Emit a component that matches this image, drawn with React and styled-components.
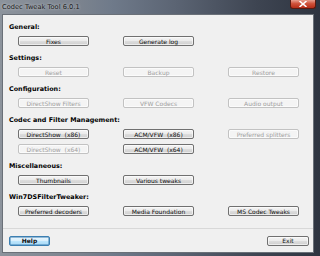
import React from "react";
import styled, { createGlobalStyle } from "styled-components";

const Global = createGlobalStyle`
  html, body { margin: 0; padding: 0; width: 320px; height: 256px; overflow: hidden; background: #3a4250; }
  * { box-sizing: border-box; }
`;

const Window = styled.div`
  width: 320px;
  height: 256px;
  display: flex;
  flex-direction: column;
  background: linear-gradient(90deg, #8c939c 0%, #7b838e 25%, #6f7a8a 35%, #5b6473 55%, #3e4552 80%, #2e3440 100%);
  font-family: "DejaVu Sans", Tahoma, sans-serif;
`;

const TitleBar = styled.div`
  height: 14px;
  display: flex;
  align-items: center;
  padding-left: 2px;
  position: relative;
`;

const Title = styled.span`
  font-family: "DejaVu Sans", sans-serif;
  font-size: 6.6px;
  color: #1a1a1a;
  text-shadow: 0 0 3px rgba(255,255,255,0.7);
  letter-spacing: 0.05px;
`;

const CloseBtn = styled.div`
  position: absolute;
  right: 4px;
  top: 0;
  width: 26px;
  height: 9px;
  border-radius: 0 0 3px 3px;
  background: linear-gradient(180deg, #e8a090 0%, #d0523a 45%, #b52d18 100%);
  border: 1px solid #5a1a10;
  border-top: none;
  display: flex;
  align-items: center;
  justify-content: center;
`;

const Body = styled.div`
  flex: 1;
  display: flex;
  padding: 0 6px 3px 2px;
`;

const Client = styled.div`
  flex: 1;
  background: #f0f0f0;
  display: flex;
  flex-direction: column;
  border: 1px solid #6a7078;
`;

const Content = styled.div`
  flex: 1;
  padding: 7px 0 0 15px;
  display: flex;
  flex-direction: column;
  gap: 7px;
`;

const Section = styled.div`
  display: flex;
  flex-direction: column;
`;

const Header = styled.div`
  height: 10px;
  line-height: 10px;
  font-size: 6.4px;
  font-weight: bold;
  color: #000;
  margin-left: -9px;
  margin-bottom: 4px;
`;

const Grid = styled.div`
  display: grid;
  grid-template-columns: 71px 71px 71px;
  column-gap: 34px;
  row-gap: 5px;
`;

const Button = styled.div`
  height: 10px;
  border-radius: 2px;
  border: 1px solid ${p => (p.disabled ? "#c2c2c2" : "#707070")};
  background: ${p =>
    p.focus
      ? "linear-gradient(180deg, #eaf6fd 0%, #d9f0fc 50%, #bee6fd 51%, #a7d9f5 100%)"
      : p.disabled
      ? "#f4f4f4"
      : "linear-gradient(180deg, #f4f4f4 0%, #ebebeb 50%, #dddddd 51%, #cfcfcf 100%)"};
  box-shadow: ${p => (p.focus ? "0 0 0 0.5px #3c7fb1 inset" : "inset 0 0 0 1px rgba(255,255,255,0.6)")};
  border-color: ${p => (p.focus ? "#3c7fb1" : p.disabled ? "#c2c2c2" : "#707070")};
  display: flex;
  align-items: center;
  justify-content: center;
  font-size: 6px;
  font-weight: ${p => (p.focus ? "bold" : "normal")};
  color: ${p => (p.disabled ? "#a0a0a0" : "#111")};
  white-space: nowrap;
  grid-column: ${p => p.col || "auto"};
`;

const Footer = styled.div`
  height: 24px;
  border-top: 1px solid #d8d8d8;
  display: flex;
  align-items: center;
  justify-content: space-between;
  padding: 0 4px 0 6px;
`;

const FooterButton = styled(Button)`
  width: ${p => p.w}px;
`;

const Frame = () => (
  <svg width="8" height="6" viewBox="0 0 8 6">
    <path d="M1 0.5 L7 5.5 M7 0.5 L1 5.5" stroke="#fff" strokeWidth="1.6" strokeLinecap="round" />
  </svg>
);

export default function App() {
  return (
    <>
      <Global />
      <Window>
        <TitleBar>
          <Title>Codec Tweak Tool 6.0.1</Title>
          <CloseBtn><Frame /></CloseBtn>
        </TitleBar>
        <Body>
          <Client>
            <Content>
              <Section>
                <Header>General:</Header>
                <Grid>
                  <Button>Fixes</Button>
                  <Button>Generate log</Button>
                </Grid>
              </Section>
              <Section>
                <Header>Settings:</Header>
                <Grid>
                  <Button disabled>Reset</Button>
                  <Button disabled>Backup</Button>
                  <Button disabled>Restore</Button>
                </Grid>
              </Section>
              <Section>
                <Header>Configuration:</Header>
                <Grid>
                  <Button disabled>DirectShow Filters</Button>
                  <Button disabled>VFW Codecs</Button>
                  <Button disabled>Audio output</Button>
                </Grid>
              </Section>
              <Section>
                <Header>Codec and Filter Management:</Header>
                <Grid>
                  <Button>DirectShow&nbsp;&nbsp;(x86)</Button>
                  <Button>ACM/VFW&nbsp;&nbsp;(x86)</Button>
                  <Button disabled>Preferred splitters</Button>
                  <Button disabled>DirectShow&nbsp;&nbsp;(x64)</Button>
                  <Button>ACM/VFW&nbsp;&nbsp;(x64)</Button>
                </Grid>
              </Section>
              <Section>
                <Header>Miscellaneous:</Header>
                <Grid>
                  <Button>Thumbnails</Button>
                  <Button>Various tweaks</Button>
                </Grid>
              </Section>
              <Section>
                <Header>Win7DSFilterTweaker:</Header>
                <Grid>
                  <Button>Preferred decoders</Button>
                  <Button>Media Foundation</Button>
                  <Button>MS Codec Tweaks</Button>
                </Grid>
              </Section>
            </Content>
            <Footer>
              <FooterButton focus w={41}>Help</FooterButton>
              <FooterButton w={42}>Exit</FooterButton>
            </Footer>
          </Client>
        </Body>
      </Window>
    </>
  );
}
